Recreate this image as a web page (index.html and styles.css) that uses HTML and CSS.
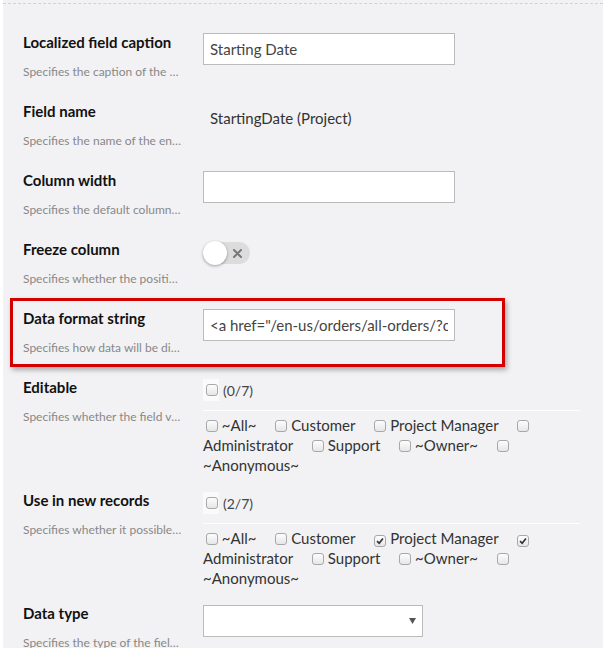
FILE: index.html
```html
<!DOCTYPE html>
<html lang="en">
<head>
  <meta charset="UTF-8">
  <title>Field settings</title>
  <link rel="stylesheet" href="styles.css">
</head>
<body>

<div class="panel">
  <div class="panel-inner">

    <div class="row">
      <div class="caption">
        <div class="title">Localized field caption</div>
        <div class="hint">Specifies the caption of the field in the current language</div>
      </div>
      <div class="control">
        <input class="text-input" type="text" value="Starting Date">
      </div>
    </div>

    <div class="row">
      <div class="caption">
        <div class="title">Field name</div>
        <div class="hint">Specifies the name of the entity field</div>
      </div>
      <div class="control">
        <div class="value">StartingDate (Project)</div>
      </div>
    </div>

    <div class="row">
      <div class="caption">
        <div class="title">Column width</div>
        <div class="hint">Specifies the default column width</div>
      </div>
      <div class="control">
        <input class="text-input" type="text" value="">
      </div>
    </div>

    <div class="row">
      <div class="caption">
        <div class="title">Freeze column</div>
        <div class="hint">Specifies whether the position of the column is frozen</div>
      </div>
      <div class="control">
        <div class="toggle">
          <span class="knob"></span>
          <svg class="toggle-x" width="9" height="9" viewBox="0 0 9 9">
            <path d="M1 1 L8 8 M8 1 L1 8" stroke="#777" stroke-width="2" stroke-linecap="round"/>
          </svg>
        </div>
      </div>
    </div>

    <!-- highlighted row -->
    <div class="row highlight">
      <div class="caption">
        <div class="title">Data format string</div>
        <div class="hint">Specifies how data will be displayed</div>
      </div>
      <div class="control">
        <input class="text-input" type="text" value="&lt;a href=&quot;/en-us/orders/all-orders/?customer={0}&quot;&gt;{1}&lt;/a&gt;">
      </div>
    </div>

    <div class="row tall">
      <div class="caption">
        <div class="title">Editable</div>
        <div class="hint">Specifies whether the field value can be edited</div>
      </div>
      <div class="control">
        <div class="count">
          <span class="cb-wrap"><span class="cb"></span></span>
          <span class="count-text">(0/7)</span>
        </div>
        <div class="roles">
          <span class="cb"></span> <span class="role">~All~</span>
          <span class="cb"></span> <span class="role">Customer</span>
          <span class="cb"></span> <span class="role">Project Manager</span>
          <span class="cb"></span> <span class="role">Administrator</span>
          <span class="cb"></span> <span class="role">Support</span>
          <span class="cb"></span> <span class="role">~Owner~</span>
          <span class="cb"></span> <span class="role">~Anonymous~</span>
        </div>
      </div>
    </div>

    <div class="row tall">
      <div class="caption">
        <div class="title">Use in new records</div>
        <div class="hint">Specifies whether it possible to set value in new records</div>
      </div>
      <div class="control">
        <div class="count">
          <span class="cb-wrap"><span class="cb"></span></span>
          <span class="count-text">(2/7)</span>
        </div>
        <div class="roles">
          <span class="cb"></span> <span class="role">~All~</span>
          <span class="cb"></span> <span class="role">Customer</span>
          <span class="cb checked"><svg width="8" height="8" viewBox="0 0 9 9"><path d="M1.2 4.6 L3.6 7 L7.8 1.6" fill="none" stroke="#333" stroke-width="1.9"/></svg></span> <span class="role">Project Manager</span>
          <span class="cb checked"><svg width="8" height="8" viewBox="0 0 9 9"><path d="M1.2 4.6 L3.6 7 L7.8 1.6" fill="none" stroke="#333" stroke-width="1.9"/></svg></span> <span class="role">Administrator</span>
          <span class="cb"></span> <span class="role">Support</span>
          <span class="cb"></span> <span class="role">~Owner~</span>
          <span class="cb"></span> <span class="role">~Anonymous~</span>
        </div>
      </div>
    </div>

    <div class="row">
      <div class="caption">
        <div class="title">Data type</div>
        <div class="hint">Specifies the type of the field data</div>
      </div>
      <div class="control">
        <div class="select">
          <svg class="select-arrow" width="7" height="6" viewBox="0 0 7 6">
            <path d="M0 0 H7 L3.5 6 Z" fill="#555"/>
          </svg>
        </div>
      </div>
    </div>

  </div>
</div>

</body>
</html>
```

FILE: styles.css
```css
body {
  margin: 0;
  background-color: #fff;
  font-family: 'Lato', 'Open Sans', sans-serif;
}

.panel {
  margin: 0 3px;
  padding-top: 3px;
  min-height: 645px;
  background-color: #f2f2f4;
}

.panel-inner {
  border-top: 1px dashed #d2d2d2;
  padding-top: 18px;
}

.row {
  display: grid;
  grid-template-columns: 180px 1fr;
  padding: 10px 0 11px 20px;
}

.row.tall {
  padding-bottom: 5px;
}

.row.highlight {
  box-sizing: border-box;
  width: 495px;
  margin-left: 7px;
  padding: 7px 0 8px 10px;
  border: 3px solid #d40000;
  box-shadow: 2px 3px 5px rgba(0, 0, 0, 0.3);
}

.title {
  font-size: 15px;
  font-weight: bold;
  line-height: 20px;
  color: #111;
}

.hint {
  width: 160px;
  margin-top: 12px;
  font-size: 12px;
  line-height: 16px;
  color: #888;
  white-space: nowrap;
  overflow: hidden;
  text-overflow: ellipsis;
}

.text-input {
  display: block;
  box-sizing: border-box;
  width: 252px;
  height: 32px;
  margin: 1px 0 0;
  padding: 0 6px;
  border: 1px solid #bbb;
  border-radius: 0;
  background-color: #fff;
  font-family: 'Lato', 'Open Sans', sans-serif;
  font-size: 15px;
  color: #444;
  outline: none;
}

.value {
  padding: 7px 0 0 7px;
  font-size: 15px;
  line-height: 20px;
  color: #333;
}

/* toggle */
.toggle {
  position: relative;
  width: 47px;
  height: 22px;
  margin-top: 3px;
  border-radius: 11px;
  background-color: #dcdcdc;
}

.knob {
  position: absolute;
  left: 0;
  top: -1px;
  width: 24px;
  height: 24px;
  border-radius: 50%;
  background-color: #fff;
  box-shadow: 0 1px 3px rgba(0, 0, 0, 0.35);
}

.toggle-x {
  position: absolute;
  left: 30px;
  top: 7px;
}

/* role checkboxes */
.count {
  display: flex;
  align-items: center;
  height: 22px;
  margin-top: 2px;
}

.cb-wrap {
  display: flex;
  align-items: center;
  height: 22px;
  padding: 0 1px 0 3px;
  background-color: #fafafa;
}

.count-text {
  margin-left: 4px;
  font-size: 14px;
  color: #444;
}

.cb {
  display: inline-flex;
  align-items: center;
  justify-content: center;
  box-sizing: border-box;
  width: 12px;
  height: 12px;
  border: 1px solid #a8a8a8;
  border-radius: 3px;
  background: linear-gradient(to bottom, #fdfdfd, #e6e6e6);
  vertical-align: -1px;
}

.roles .cb {
  margin-left: 3px;
}

.roles {
  width: 377px;
  margin-top: 9px;
  padding-top: 4px;
  border-top: 1px solid #fff;
  font-size: 15px;
  line-height: 20px;
  color: #333;
}

.role {
  margin-right: 12px;
}

/* select */
.select {
  position: relative;
  box-sizing: border-box;
  width: 220px;
  height: 32px;
  margin-top: 2px;
  border: 1px solid #bbb;
  background-color: #fff;
}

.select-arrow {
  position: absolute;
  right: 6px;
  top: 12px;
}
```
